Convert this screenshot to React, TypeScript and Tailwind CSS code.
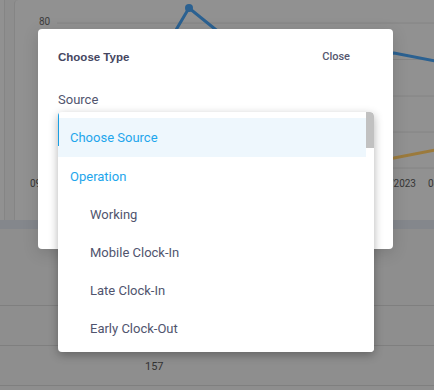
const sources = [
  { label: "Operation", group: true },
  { label: "Working" },
  { label: "Mobile Clock-In" },
  { label: "Late Clock-In" },
  { label: "Early Clock-Out" },
];

function Chart() {
  // drawn in page coordinates; the card starts at x=14
  return (
    <svg width="420" height="220" viewBox="14 0 420 220" className="block">
      <text x="38" y="25" fontSize="10" fill="#3d3d3d" fontFamily="Roboto, sans-serif">
        80
      </text>
      {[23, 59.5, 96, 132, 168].map((y) => (
        <line key={y} x1="56" x2="434" y1={y} y2={y} stroke="#848484" strokeWidth="1" />
      ))}
      <polyline points="150,72 188,8 240,50 300,60 393,53 434,61" fill="none" stroke="#2b6191" strokeWidth="3" />
      <circle cx="188" cy="8" r="4" fill="#2b6191" />
      <polyline points="330,165 393,158 434,150" fill="none" stroke="#9b7a3c" strokeWidth="3" />
      <text x="29" y="187" fontSize="10" fill="#363636" fontFamily="Roboto, sans-serif">
        09/11
      </text>
      <text x="415" y="187" fontSize="10" fill="#363636" textAnchor="end" fontFamily="Roboto, sans-serif">
        08/14/2023
      </text>
      <text x="427" y="187" fontSize="10" fill="#363636" fontFamily="Roboto, sans-serif">
        08
      </text>
    </svg>
  );
}

export default function App() {
  return (
    <div className="relative h-[390px] w-[434px] overflow-hidden bg-[#8e8e8e] font-['Roboto',sans-serif]">
      {/* dimmed page behind the dialog */}
      <div className="flex h-[220px] gap-[9px]">
        <div className="w-[5px] border-r border-[#858585] bg-[#919191]" />
        <div className="flex-1 overflow-hidden rounded-tl-[4px] border-l border-[#858585] bg-[#919191]">
          <Chart />
        </div>
      </div>
      <div className="h-[9px] bg-[#84878c]" />
      <div className="flex flex-col">
        <div className="h-[77px] border-b border-[#7f7f7f]" />
        <div className="h-[40px] border-b border-[#7f7f7f]" />
        <div className="flex h-[40px] items-center border-b border-[#7f7f7f] pl-[145px] pt-[4px] text-[11px] text-[#333]">
          157
        </div>
      </div>

      {/* dialog */}
      <div className="absolute left-[38px] top-[29px] h-[220px] w-[355px] rounded-[4px] bg-white shadow-[0_4px_16px_rgba(0,0,0,0.15)]">
        <div className="flex items-center justify-between pl-[20px] pr-[43px] pt-[20px]">
          <span className="font-['Liberation_Sans',sans-serif] text-[11.5px] font-bold text-[#44465f]">Choose Type</span>
          <span className="text-[11px] font-medium text-[#55576f]">Close</span>
        </div>
        <div className="pl-[20px] pt-[24px] text-[13px] text-[#50546e]">Source</div>
      </div>

      {/* open select menu */}
      <div className="absolute left-[58px] top-[112px] flex h-[240px] w-[316px] overflow-hidden rounded-[4px] bg-white shadow-[0_3px_10px_rgba(0,0,0,0.3)]">
        <div className="flex-1 pt-[6px]">
          <div className="flex h-[39px] items-center bg-[#eef7fd] pl-[12px] pt-[1px] text-[13px] text-[#1ea6ec]">
            Choose Source
          </div>
          {sources.map((s) => (
            <div
              key={s.label}
              className={
                s.group
                  ? "flex h-[38px] items-center pl-[12px] pt-[2px] text-[13px] text-[#1ea6ec]"
                  : "flex h-[38px] items-center pl-[32px] pt-[2px] text-[13px] text-[#50546e]"
              }
            >
              {s.label}
            </div>
          ))}
        </div>
        <div className="w-[8px] bg-white">
          <div className="h-[36px] rounded-tr-[4px] bg-[#c1c1c1]" />
        </div>
        <div className="absolute left-0 top-0 h-[34px] w-px bg-[#1a9fe3]" />
      </div>
    </div>
  );
}
